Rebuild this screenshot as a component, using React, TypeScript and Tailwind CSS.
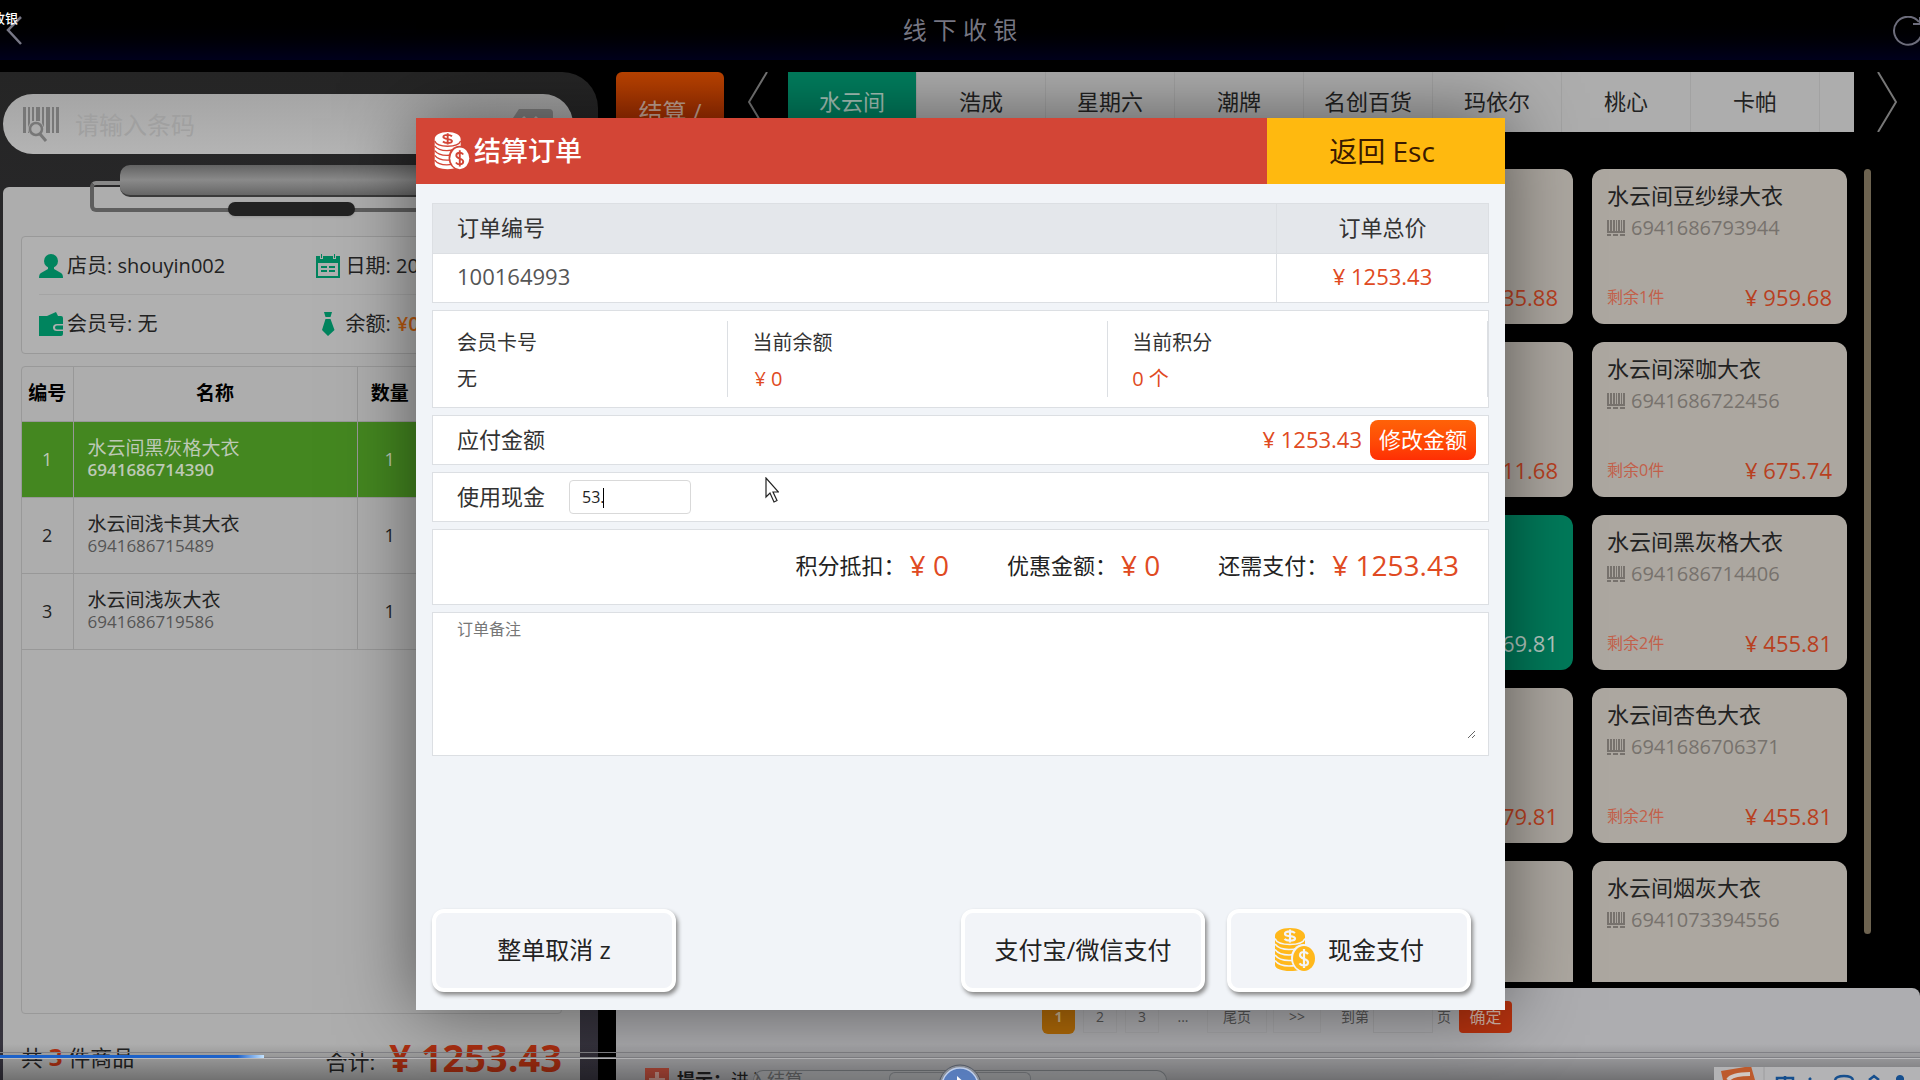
import { useState } from "react";

const categories = ["水云间", "浩成", "星期六", "潮牌", "名创百货", "玛依尔", "桃心", "卡帕"];

const cartItems = [
    { name: "水云间黑灰格大衣", code: "6941686714390", count: 1 },
    { name: "水云间浅卡其大衣", code: "6941686715489", count: 1 },
    { name: "水云间浅灰大衣", code: "6941686719586", count: 1 },
];

// left column sits mostly behind the dialog, so only prices are shown there
const products = [
    { price: "35.88" },
    { name: "水云间豆纱绿大衣", code: "6941686793944", stock: 1, price: "959.68" },
    { price: "11.68" },
    { name: "水云间深咖大衣", code: "6941686722456", stock: 0, price: "675.74" },
    { price: "69.81", active: true },
    { name: "水云间黑灰格大衣", code: "6941686714406", stock: 2, price: "455.81" },
    { price: "79.81" },
    { name: "水云间杏色大衣", code: "6941686706371", stock: 2, price: "455.81" },
    { price: "79.81" },
    { name: "水云间烟灰大衣", code: "6941073394556", price: "568.81" },
];

function CoinsIcon({ className, cut }: { className: string; cut: string }) {
    return (
        <svg viewBox="0 0 40 44" className={className} aria-hidden="true">
            <path
                fill="currentColor"
                d="M0 8v29c0 3.500 6.500 6 15 6 4 0 7.500-.5 10-1.500V18h5V8C30 3.500 23.500 0 15 0S0 3.500 0 8Z"
            />
            <g fill="none" stroke={cut} strokeWidth="1.600">
                <path d="M0 10.500c1.500 4 7.500 6 15 6s13.500-2 15-6" />
                <path d="M0 16c3 4 8 5.500 14 5.500 3 0 6-.3 9-1.200" />
                <path d="M0 21.500c3 4 8 5.500 14 5.500 2 0 4-.2 6-.7" />
                <path d="M0 27c3 4 8 5.500 14 5.500h5" />
                <path d="M0 32.500c3 4 8 5.500 14 5.500 2 0 4-.1 6-.5" />
            </g>
            <ellipse cx="28.500" cy="30" rx="12.500" ry="14" fill={cut} />
            <ellipse cx="29" cy="30.500" rx="11" ry="12.500" fill="currentColor" />
            <g fill="none" stroke={cut} strokeWidth="2.200">
                <path d="M20 5c-1.500-1.200-3-1.700-5-1.700-3.200 0-5 1.200-5 2.600 0 3.200 10 1.400 10 4.600 0 1.500-2 2.200-5 2.200-2.200 0-4.200-.5-5.500-1.700M15 1.500v13" />
                <path d="M33 26c-1-1.300-2.300-2-4-2-2.500 0-4 1.300-4 3.200 0 4.300 8 2.800 8 7 0 2-1.500 3.300-4 3.300-2 0-3.400-.7-4.500-2.200M29 21v19" />
            </g>
        </svg>
    );
}

function BarcodeIcon() {
    return (
        <svg viewBox="0 0 18 16" className="h-4 w-[18px] shrink-0" fill="#77726d" aria-hidden="true">
            <path d="M0 0h2v11H0zM3 0h2v11H3zM6 0h2v11H6zM9 0h1v11H9zM11 0h2v11h-2zM14 0h1v11h-1zM16 0h2v11h-2zM0 11h18v2H0zM0 14h4v2H0zM6 14h5v2H6zM13 14h5v2h-5z" />
        </svg>
    );
}

function Chevron({ flip }: { flip?: boolean }) {
    return (
        <svg viewBox="0 0 20 60" className="h-[60px] w-5" fill="none" stroke="#777" strokeWidth="2" aria-hidden="true">
            <path d={flip ? "M1 0l18 30L1 60" : "M19 0L1 30l18 30"} />
        </svg>
    );
}

function TopBar() {
    return (
        <header className="relative flex h-[60px] shrink-0 items-center justify-center bg-linear-to-b from-black from-20% to-[#00001c]">
            <button className="absolute top-4 left-1.5" aria-label="返回上一页">
                <svg viewBox="0 0 16 30" className="h-[30px] w-4" fill="none" stroke="#777786" strokeWidth="2.500">
                    <path d="M15 1L2 14l13 14" />
                </svg>
            </button>
            <span className="absolute top-2 -left-2 text-[13px] leading-5 font-medium text-white">收银</span>
            <h1 className="text-2xl text-[#777783]">线 下 收 银</h1>
            <button className="absolute top-4 -right-1" aria-label="刷新">
                <svg viewBox="0 0 32 32" className="size-8" fill="none" stroke="#6d6d7c" strokeWidth="2">
                    <path d="M27 6a14 14 0 1 0 3 10M28 1v7h-7" />
                </svg>
            </button>
        </header>
    );
}

function SearchBox() {
    return (
        <div className="mt-[22px] mr-[25px] ml-[3px] flex h-[60px] shrink-0 items-center rounded-full bg-linear-to-b from-[#a5a5a5] to-[#b4b4b4] px-5">
            <svg viewBox="0 0 36 36" className="size-9 shrink-0" fill="#777" aria-hidden="true">
                <path d="M0 1h3v26H0zM5 1h2v26H5zM9 1h2v14H9zM13 1h4v14h-4zM19 1h2v20h-2zM23 1h4v26h-4zM29 1h2v26h-2zM33 1h3v26h-3z" />
                <circle cx="13" cy="23" r="8" fill="#adadad" />
                <circle cx="13" cy="23" r="6" fill="none" stroke="#777" strokeWidth="2.500" />
                <path d="M17 28l6 7" stroke="#777" strokeWidth="3" />
            </svg>
            <input
                aria-label="条码"
                placeholder="请输入条码"
                className="ml-4 h-full min-w-0 flex-1 bg-transparent text-2xl outline-none placeholder:text-[#a0a0a0]"
            />
            <svg viewBox="0 0 44 30" className="h-[30px] w-11 shrink-0" aria-hidden="true">
                <path d="M10 0h30q4 0 4 4v22q0 4-4 4H10L0 15z" fill="#7f7f7f" />
                <path d="M14 8l14 14M28 8L14 22" stroke="#adadad" strokeWidth="3" />
            </svg>
        </div>
    );
}

function ClipboardClip() {
    return (
        <div className="absolute top-[-22px] right-[87px] left-[87px] h-[51px]" aria-hidden="true">
            <div className="absolute top-4 right-0 bottom-1 left-0 rounded-md border-4 border-[#5e5e5e] border-t-[#888]" />
            <div className="absolute top-0 right-[30px] left-[30px] h-8 rounded-[10px] border-b-2 border-[#3a3a3a] bg-linear-to-b from-[#636363] via-[#8a8a8a] to-[#666]" />
            <div className="absolute bottom-0 left-[138px] h-3.5 w-[127px] rounded-full bg-[#222] shadow" />
        </div>
    );
}

function StaffInfo() {
    return (
        <section className="shrink-0 rounded border border-[#999] bg-[#b0b0b0] px-[17px] text-xl text-[#222]">
            <div className="grid h-[58px] grid-cols-2 items-center border-b border-[#a4a4a4]">
                <p className="flex items-center gap-1">
                    <svg viewBox="0 0 24 24" className="size-6" fill="#00845e" aria-hidden="true">
                        <ellipse cx="12" cy="7" rx="7" ry="7" />
                        <path d="M9 12h6v3l7 4q2 1 2 5H0q0-4 2-5l7-4z" />
                    </svg>
                    店员: shouyin002
                </p>
                <p className="flex items-center gap-1.5 pl-6">
                    <svg viewBox="0 0 24 24" className="size-6" fill="#00845e" aria-hidden="true">
                        <path d="M0 2h4v3h3V2h10v3h3V2h4v22H0zM2 9v13h20V9z" fillRule="evenodd" />
                        <path d="M5 0h1v4H5zM18 0h1v4h-1zM5 12h6v2H5zM13 12h6v2h-6zM5 16h6v2H5zM13 16h6v2h-6z" />
                    </svg>
                    日期: 20
                </p>
            </div>
            <div className="grid h-[58px] grid-cols-2 items-center">
                <p className="flex items-center gap-1">
                    <svg viewBox="0 0 24 24" className="size-6" fill="#00845e" aria-hidden="true">
                        <path d="M8 4l9-4 2 4zM0 4h22q2 0 2 2v6h-6q-4 0-4 3.500t4 3.500h6v3q0 2-2 2H0z" />
                        <path d="M18 13.500h6v4h-6q-2 0-2-2t2-2z" />
                    </svg>
                    会员号: 无
                </p>
                <p className="flex items-center gap-1.5 pl-6">
                    <svg viewBox="0 0 24 24" className="size-6" fill="#00845e" aria-hidden="true">
                        <path d="M8 0h8l-1.500 5h-5zM9.500 7h5l4 11L12 24l-6-6z" />
                    </svg>
                    余额: <span className="font-semibold text-[#b95a10]">¥0</span>
                </p>
            </div>
        </section>
    );
}

function CartTable() {
    return (
        <div className="mt-3 min-h-0 flex-1 rounded border border-[#999]">
            <table className="w-full table-fixed border-collapse text-lg text-[#222]">
                <colgroup>
                    <col className="w-[51px]" />
                    <col className="w-[284px]" />
                    <col className="w-[65px]" />
                    <col />
                </colgroup>
                <thead>
                    <tr className="h-[54px] text-[19px] text-black">
                        <th className="border-r border-b border-[#989898]">编号</th>
                        <th className="border-r border-b border-[#989898]">名称</th>
                        <th className="border-b border-[#989898]">数量</th>
                        <th className="border-b border-[#989898]" />
                    </tr>
                </thead>
                <tbody>
                    {cartItems.map((item, idx) => (
                        <tr
                            key={item.code}
                            className={`h-[76px] border-b border-[#989898] text-center ${idx === 0 ? "bg-[#448720] text-[#bdc9b6]" : ""}`}
                        >
                            <td className="border-r border-[#989898]">{idx + 1}</td>
                            <td className="border-r border-[#989898] pl-3.5 text-left">
                                <p className="text-[19px] leading-[22px]">{item.name}</p>
                                <p className={`text-[17px] leading-[22px] ${idx === 0 ? "font-semibold" : "text-[#555]"}`}>{item.code}</p>
                            </td>
                            <td>{item.count}</td>
                            <td />
                        </tr>
                    ))}
                </tbody>
            </table>
        </div>
    );
}

function CartPanel() {
    return (
        <aside className="flex w-[598px] shrink-0 flex-col rounded-tr-[36px] bg-linear-to-b from-[#252525] to-[#37343f]">
            <SearchBox />
            <div className="relative mt-[33px] mr-[18px] ml-[3px] flex min-h-0 flex-1 flex-col rounded-t-md bg-[#adadad] px-[18px] pt-[49px]">
                <ClipboardClip />
                <StaffInfo />
                <CartTable />
                <div className="flex h-[66px] shrink-0 items-center justify-between pt-5">
                    <p className="text-[22px] text-[#222]">
                        共 <b className="text-2xl text-[#b13112]">3</b> 件商品
                    </p>
                    <p className="flex items-center text-[22px] text-[#222]">
                        <span className="pt-2">合计:</span>
                        <b className="ml-3.5 text-[38px] leading-9 text-[#b13112]">¥ 1253.43</b>
                    </p>
                </div>
            </div>
        </aside>
    );
}

function ProductCard({ product }: { product: (typeof products)[number] }) {
    return (
        <article
            className={`flex h-[155px] flex-col rounded-xl px-[15px] pt-[11px] pb-3 ${product.active ? "bg-[#007a5a] text-[#b5c9c1]" : "bg-[#aca7a0] text-[#b8401f]"}`}
        >
            {product.name && (
                <>
                    <h3 className="text-[22px] leading-[30px] text-[#222]">{product.name}</h3>
                    <p className="mt-1 flex items-center gap-1.5 text-xl leading-7 text-[#77726d]">
                        <BarcodeIcon />
                        {product.code}
                    </p>
                </>
            )}
            <div className="mt-auto flex items-center justify-between">
                <span className="text-base text-[#c2604a]">{product.stock !== undefined && `剩余${product.stock}件`}</span>
                <span className="text-[22px] leading-[30px]">¥ {product.price}</span>
            </div>
        </article>
    );
}

function Pagination() {
    return (
        <nav className="flex items-center pl-[426px] text-sm text-[#555]" aria-label="分页">
            <button className="h-[34px] w-[33px] rounded-md bg-[#b06a08] font-bold text-[#c9b48f]">1</button>
            <button className="ml-2 h-8 w-[34px] border border-[#a6a6a8]">2</button>
            <button className="ml-2 h-8 w-[34px] border border-[#a6a6a8]">3</button>
            <span className="w-12 text-center">...</span>
            <button className="h-8 w-[60px] border border-[#a6a6a8]">尾页</button>
            <button className="ml-1.5 h-8 w-12 border border-[#a6a6a8]">&gt;&gt;</button>
            <label className="ml-5 flex items-center gap-1">
                到第
                <input className="h-8 w-[60px] border border-[#a2a2a4] bg-transparent" />
                页
            </label>
            <button className="ml-2 h-8 w-[53px] rounded bg-[#b9330f] text-base text-[#d5b5a8]">确定</button>
        </nav>
    );
}

function ShopPanel() {
    const [active, setActive] = useState(0);

    return (
        <main className="ml-[18px] flex min-w-0 flex-1 flex-col">
            <div className="flex h-[60px] shrink-0">
                <button className="flex w-[108px] justify-center rounded-t-md bg-linear-to-b from-[#bf4500] to-[#9c2800] pt-6 text-2xl text-[#c9a797]">
                    结算 /
                </button>
                <button className="ml-6" aria-label="上一组">
                    <Chevron />
                </button>
                <div className="ml-5 flex min-w-0 flex-1 bg-[#adadad] text-[22px]">
                    {categories.map((name, idx) => (
                        <button
                            key={name}
                            onClick={() => setActive(idx)}
                            className={`w-[12.1%] border-r border-[#a2a2a2] pb-0.5 text-center ${idx === active ? "bg-[#007e5e] text-[#a9c7bc]" : "text-[#222]"}`}
                        >
                            {name}
                        </button>
                    ))}
                </div>
                <button className="mr-[23px] ml-[23px]" aria-label="下一组">
                    <Chevron flip />
                </button>
            </div>

            <div className="mt-[37px] mr-[49px] flex min-h-0 flex-1 justify-end gap-[17px] overflow-hidden">
                <div className="grid w-[529px] grid-cols-2 content-start gap-x-[19px] gap-y-[18px]">
                    {products.map((product, idx) => (
                        <ProductCard key={idx} product={product} />
                    ))}
                </div>
                <div className="mb-12 w-[7px] rounded-full bg-[#6d6350]" />
            </div>

            <footer className="mt-1.5 h-[92px] shrink-0 overflow-hidden rounded-t-lg bg-[#adadb0] pt-3">
                <Pagination />
                <p className="mt-8 ml-[29px] flex items-center gap-2 text-lg text-[#222]">
                    <svg viewBox="0 0 24 24" className="size-6" aria-hidden="true">
                        <path d="M0 0h24v24H0z" fill="#c4513f" />
                        <path d="M12 4v16M4 12h16" stroke="#d9a399" strokeWidth="4" />
                    </svg>
                    <span>
                        <b>提示：</b>进入结算
                    </span>
                </p>
            </footer>
        </main>
    );
}

function CheckoutDialog() {
    const [cash, setCash] = useState("53.");
    const [remark, setRemark] = useState("");
    const box = "border border-[#dcdfe3] bg-white";
    const action = "flex h-[83px] w-[244px] items-center justify-center rounded-xl border-4 border-white bg-[#f2f4f8] pb-0.5 text-2xl text-[#222] shadow-[2px_3px_4px_#888]";

    return (
        <div
            role="dialog"
            aria-label="结算订单"
            className="relative flex flex-1 flex-col bg-[#f1f4f8] shadow-[0_0_70px_rgba(0,0,0,0.5)]"
        >
            <div className="flex h-[66px] shrink-0 bg-[#d34536]">
                <h2 className="flex flex-1 items-center gap-1 pl-[18px] text-[27px] font-medium text-white">
                    <CoinsIcon className="h-[38px] w-9" cut="#d34536" />
                    结算订单
                </h2>
                <button className="w-[238px] bg-[#ffb90f] pr-2 text-[28px] text-[#3a1a00]">返回 Esc</button>
            </div>

            <div className="flex min-h-0 flex-1 flex-col gap-[7px] px-4 pt-[19px] pb-[18px] text-[22px] text-[#333]">
                <table className={`w-full border-collapse ${box}`}>
                    <thead>
                        <tr className="h-[50px] bg-[#e4e7eb]">
                            <th className="border border-[#dcdfe3] pb-0.5 pl-6 text-left font-normal">订单编号</th>
                            <th className="w-[212px] border border-[#dcdfe3] pb-0.5 font-normal">订单总价</th>
                        </tr>
                    </thead>
                    <tbody>
                        <tr className="h-[49px]">
                            <td className="border border-[#dcdfe3] pb-1 pl-6 text-[#555]">100164993</td>
                            <td className="border border-[#dcdfe3] pb-1 text-center text-[#e04a22]">¥ 1253.43</td>
                        </tr>
                    </tbody>
                </table>

                <dl className={`flex py-2.5 text-[20px] ${box}`}>
                    <div className="w-[28%] border-r border-[#dcdfe3] pt-1 pl-6 leading-9">
                        <dt>会员卡号</dt>
                        <dd>无</dd>
                    </div>
                    <div className="w-[36%] border-r border-[#dcdfe3] pt-1 pl-6 leading-9">
                        <dt>当前余额</dt>
                        <dd className="pl-0.5 text-[#e04a22]">¥ 0</dd>
                    </div>
                    <div className="flex-1 border-r border-[#dcdfe3] pt-1 pl-6 leading-9">
                        <dt>当前积分</dt>
                        <dd className="text-[#e04a22]">0 个</dd>
                    </div>
                </dl>

                <div className={`flex h-[50px] shrink-0 items-center pr-3 pl-6 ${box}`}>
                    <span className="flex-1 pb-0.5">应付金额</span>
                    <span className="pb-0.5 text-[#e04a22]">¥ 1253.43</span>
                    <button className="ml-2 h-10 w-[106px] rounded-lg bg-linear-to-b from-[#ff6208] to-[#ff2e04] pb-0.5 text-white">
                        修改金额
                    </button>
                </div>

                <div className={`flex h-[50px] shrink-0 items-center pl-6 ${box}`}>
                    <label htmlFor="cash" className="pb-0.5">使用现金</label>
                    <div className="relative ml-6">
                        <input
                            id="cash"
                            value={cash}
                            onChange={(e) => setCash(e.target.value)}
                            className="block h-[34px] w-[122px] rounded border border-[#d9d9d9] bg-white px-3 text-base text-[#222] outline-none"
                        />
                        <span className="absolute top-2 left-[34px] h-5 w-px bg-black" />
                    </div>
                </div>

                <div className={`flex h-[76px] shrink-0 items-center justify-end gap-[58px] pr-[29px] pb-1 text-[#222] ${box}`}>
                    {[
                        ["积分抵扣", "0"],
                        ["优惠金额", "0"],
                        ["还需支付", "1253.43"],
                    ].map(([label, value]) => (
                        <p key={label} className="flex items-center gap-1">
                            {label}：<span className="text-[28px] leading-8 text-[#e04a22]">¥ {value}</span>
                        </p>
                    ))}
                </div>

                <div className={`shrink-0 pt-1 pr-3 pb-4 ${box}`}>
                    <textarea
                        aria-label="订单备注"
                        placeholder="订单备注"
                        value={remark}
                        onChange={(e) => setRemark(e.target.value)}
                        className="block h-[122px] w-full resize-y px-6 text-base outline-none placeholder:text-[#777]"
                    />
                </div>

                <div className="mt-auto flex gap-[22px] pr-[18px]">
                    <button className={`${action} mr-auto`}>整单取消 z</button>
                    <button className={action}>支付宝/微信支付</button>
                    <button className={`${action} gap-3`}>
                        <CoinsIcon className="h-11 w-[42px] text-[#ffb81c]" cut="#f2f4f8" />
                        现金支付
                    </button>
                </div>
            </div>

            <svg viewBox="0 0 14 26" className="absolute top-[359px] left-[349px] h-[26px] w-3.5" aria-hidden="true">
                <path d="M1 1v19l4-4 4 9 3-1.500-4-8.500h5.500z" fill="#fff" stroke="#222" strokeWidth="1.200" />
            </svg>
        </div>
    );
}

function PlayerBar() {
    return (
        <div className="absolute inset-x-0 bottom-0 h-9 bg-linear-to-b from-transparent to-black/35">
            <div className="absolute inset-x-0 top-2 h-1.5 border-y border-[#808085]" />
            <div className="absolute inset-x-0 top-[14px] h-px bg-[#b9b9bb]" />
            <div className="absolute top-[11px] left-0 h-[3px] w-[264px] bg-linear-to-r from-[#1d62c9] from-90% to-[#c5e4ff]" />
            <div className="absolute inset-x-0 bottom-0 flex h-3.5 justify-center overflow-visible">
                <div className="mt-1 h-2.5 w-[414px] rounded-t-full border border-b-0 border-[#5f6265] bg-[#85888a]/50" />
            </div>
            <div className="absolute inset-x-0 bottom-0 flex h-3.5 justify-center">
                <div className="mt-1.5 h-2 w-[142px] rounded-t-md border border-b-0 border-[#65686b]" />
            </div>
            <svg viewBox="0 0 44 16" className="absolute bottom-0 left-1/2 h-4 w-11 -translate-x-1/2" aria-hidden="true">
                <circle cx="22" cy="22" r="21" fill="#8f939b" stroke="#555b66" />
                <circle cx="22" cy="22" r="18" fill="#5a7fc0" stroke="#c4d4f2" strokeWidth="1.500" />
                <path d="M19 12l9 8-9 8z" fill="#fff" />
            </svg>
            <svg viewBox="0 0 206 13" className="absolute right-0 bottom-0 h-[13px] w-[206px]" aria-hidden="true">
                <path d="M0 0h206v13H0z" fill="#b3b3b5" />
                <path d="M7 4l30-5 4 14H9z" fill="#bd5a2c" />
                <path d="M14 13q4-6 22-6" fill="none" stroke="#d0c8c3" strokeWidth="4" />
                <path d="M50 0v13" stroke="#9c9c9e" />
                <g fill="none" stroke="#164f8e" strokeWidth="2.500">
                    <path d="M71 13v-4M63 13v-2h16v2M95 13l2-2M121 13q1-4 9-4t9 4M155 13l5-4 5 4" />
                </g>
                <path d="M182 13v-2q1-3 4-3t4 3v2z" fill="#164f8e" />
            </svg>
        </div>
    );
}

export default function App() {
    return (
        <div className="relative flex h-screen flex-col overflow-hidden bg-black font-['Open_Sans','Noto_Sans_CJK_SC',sans-serif]">
            <TopBar />
            <div className="flex min-h-0 flex-1 pt-3">
                <CartPanel />
                <ShopPanel />
            </div>
            <PlayerBar />
            <div className="absolute inset-0 flex pt-[118px] pr-[415px] pb-[70px] pl-[416px]">
                <CheckoutDialog />
            </div>
        </div>
    );
}
